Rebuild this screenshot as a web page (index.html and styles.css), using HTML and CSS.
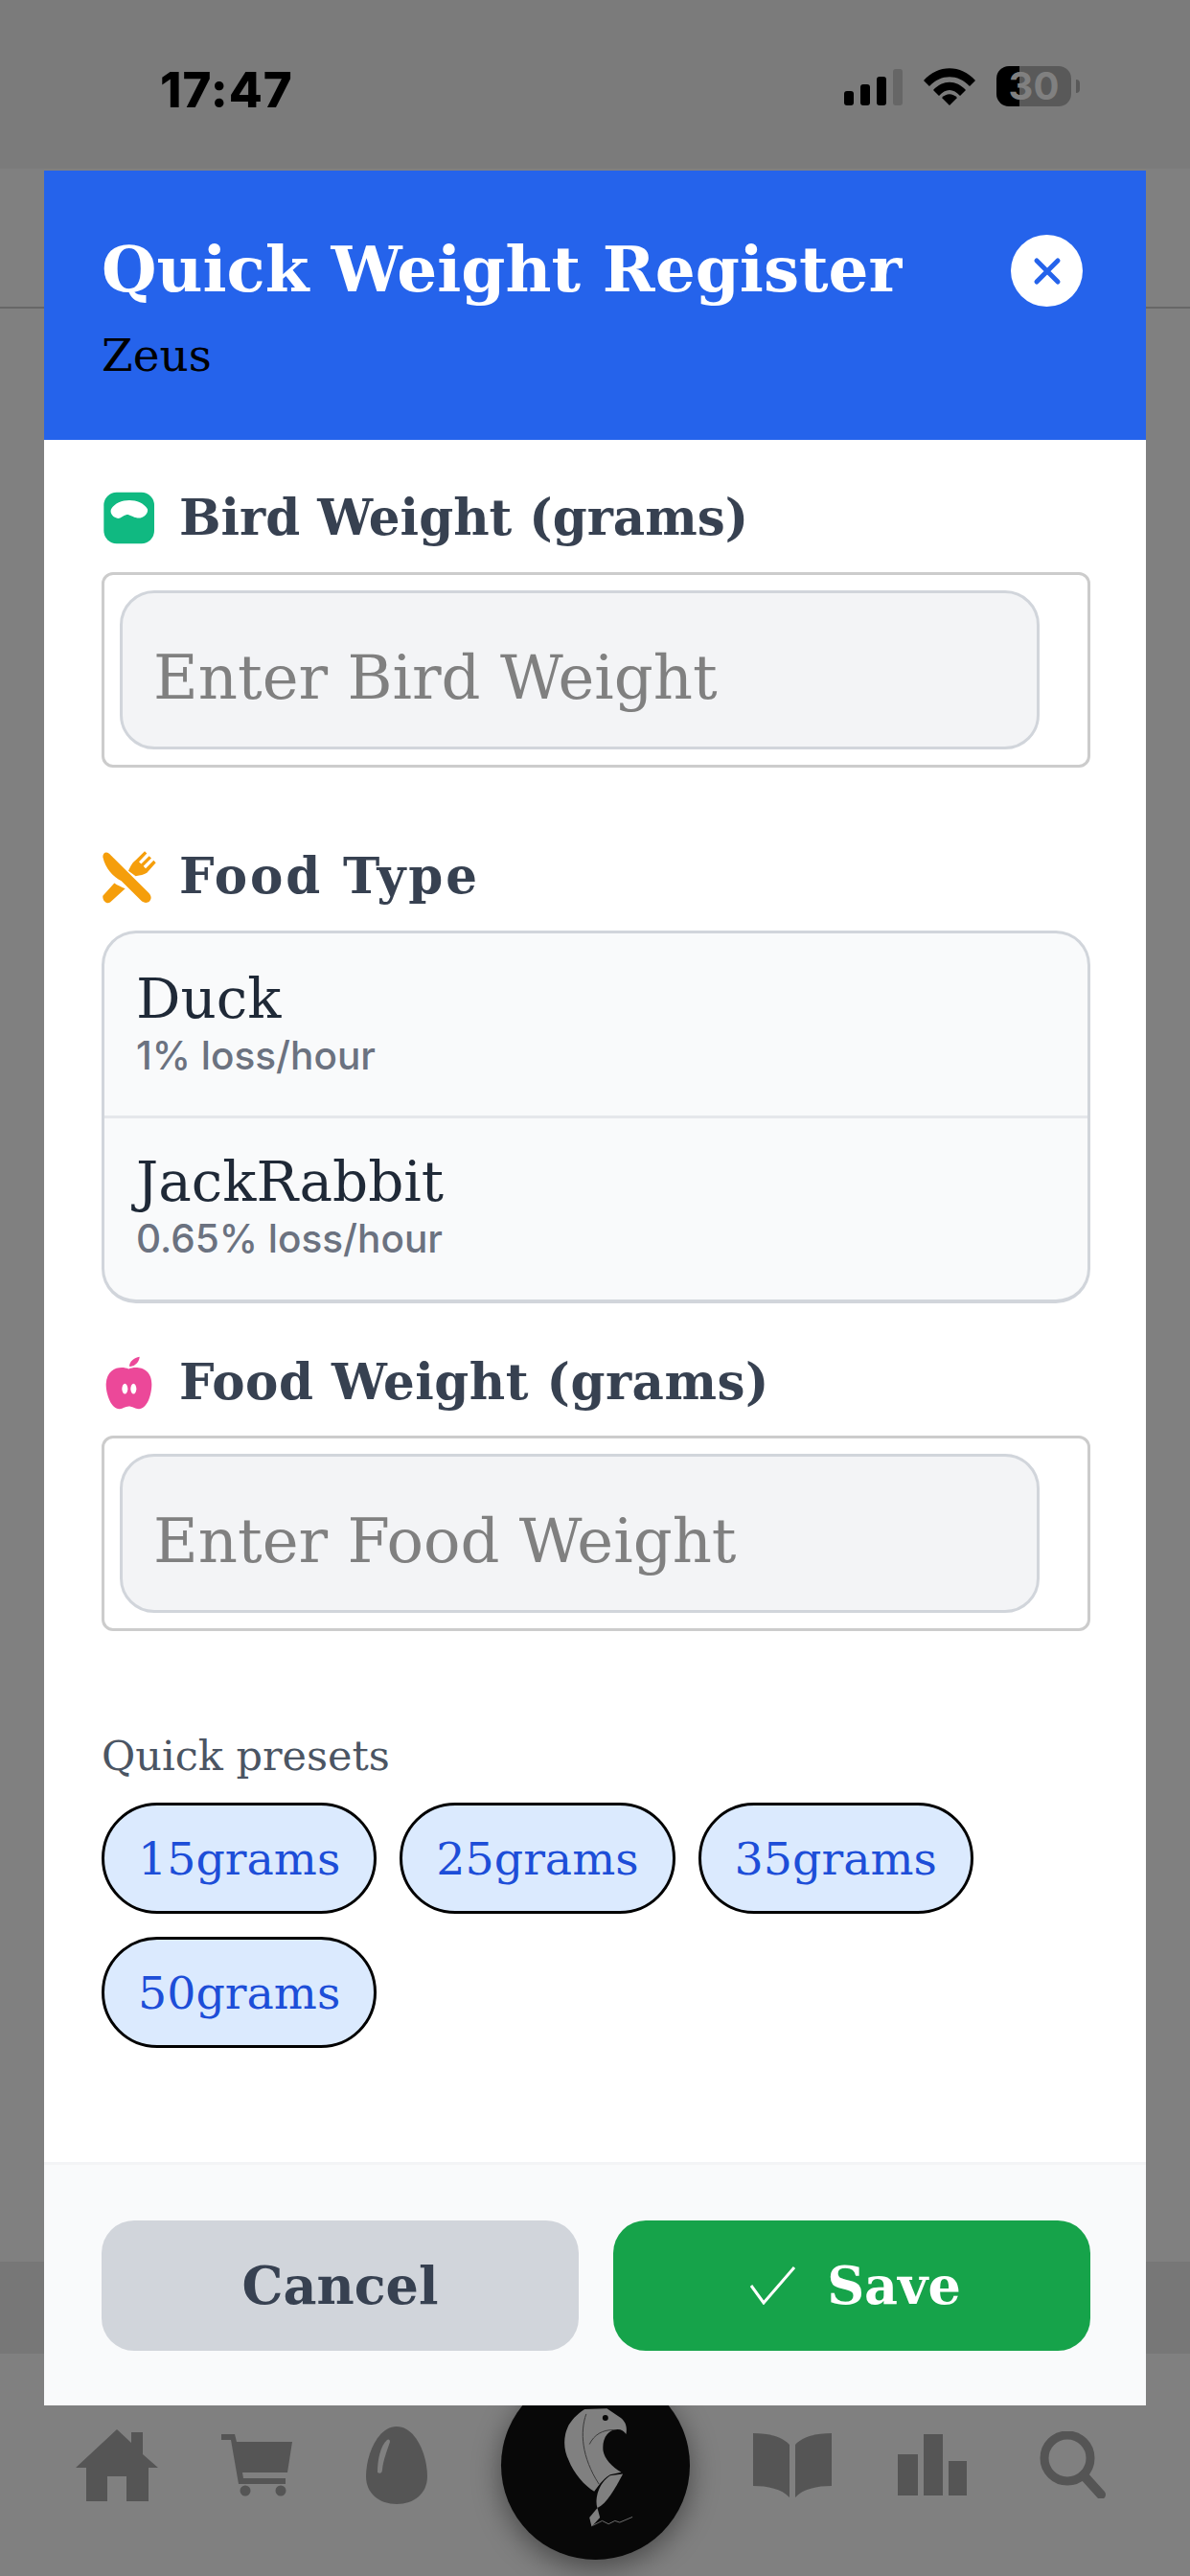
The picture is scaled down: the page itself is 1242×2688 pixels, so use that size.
FILE: index.html
```html
<!DOCTYPE html>
<html lang="en">

<head>
  <meta charset="UTF-8" />
  <meta name="viewport" content="width=device-width, initial-scale=1.0" />
  <title>Quick Weight Register</title>
  <link rel="stylesheet" href="styles.css">
</head>

<body>
  <div class="screen">
    <div class="statusbar">
      <span class="time">17:47</span>
      <div class="status-icons">
        <div class="signal">
          <i class="s1"></i><i class="s2"></i><i class="s3"></i><i class="s4"></i>
        </div>
        <svg class="wifi" viewBox="0 0 54 39">
          <path d="M0 13 C15 -4 39 -4 54 13 L48 19 C36 6 18 6 6 19 Z" />
          <path d="M10 23 C20 12 34 12 44 23 L38 29 C31 21 23 21 16 29 Z" />
          <path d="M19 31 C24 26 30 26 35 31 L27 39 Z" />
        </svg>
        <div class="battery"><b>30</b></div>
        <i class="battery-nub"></i>
      </div>
    </div>
    <div class="topbar"></div>
    <div class="content"></div>
    <div class="band"></div>
    <div class="tabbar">
      <div class="tab">
        <svg width="86" height="75" viewBox="0 0 86 75"><path d="M43 0 L58 14 V3 H70 V26 L86 40 H76 V75 H53 V49 H33 V75 H11 V40 H0 Z" /></svg>
      </div>
      <div class="tab">
        <svg width="74" height="65" viewBox="0 0 74 65">
          <path d="M0 0 H14 L16 8 H74 L69 40 H22 L23 46 H67 V52 H18 L10 6 H0 Z" />
          <circle cx="25" cy="59" r="5.5" /><circle cx="62" cy="59" r="5.5" />
        </svg>
      </div>
      <div class="tab">
        <svg width="64" height="81" viewBox="0 0 64 81">
          <path d="M32 0 C52 0 64 30 64 52 C64 70 50 81 32 81 C14 81 0 70 0 52 C0 30 12 0 32 0 Z" />
          <path class="shine" d="M22 14 C15 20 12 35 12 48 C15 50 17 48 17 45 C18 35 22 25 25 16 C25 13 23 13 22 14 Z" />
        </svg>
      </div>
      <div class="logo">
        <svg viewBox="68 -20 592 592">
          <path class="eagle" d="M330 100 L400 98 L440 125 C455 135 465 150 460 178 C450 165 440 160 420 165 C395 175 385 200 388 230 C392 255 415 280 445 298 L410 305 C385 320 370 345 360 358 C330 340 295 300 280 260 C265 230 260 190 280 150 C295 125 315 110 330 100 Z" />
          <path class="eagle-line" d="M335 115 C315 170 320 250 375 335 M345 210 C360 180 385 165 420 165" />
          <circle cx="395" cy="127" r="9" fill="#080808" />
          <path class="eagle" d="M450 303 C425 350 400 395 370 410 C360 380 375 330 410 308 Z" />
          <path class="eagle" d="M370 410 L345 440 L352 468 L378 440 Z" />
          <path class="eagle-line pen" d="M355 465 L385 450 L405 460 L425 450 L440 455 L480 438" />
        </svg>
      </div>
      <div class="tab tab-after-logo">
        <svg width="82" height="67" viewBox="0 0 82 67">
          <path d="M0 0 C15 0 30 3 38 12 V67 C30 58 15 55 0 55 Z" />
          <path d="M82 0 C67 0 52 3 44 12 V67 C52 58 67 55 82 55 Z" />
        </svg>
      </div>
      <div class="tab">
        <svg width="72" height="64" viewBox="0 0 72 64">
          <rect x="0" y="21" width="21" height="43" /><rect x="27" y="0" width="20" height="64" /><rect x="53" y="28" width="19" height="36" />
        </svg>
      </div>
      <div class="tab">
        <svg width="69" height="70" viewBox="0 0 69 70">
          <circle cx="29" cy="28" r="24" fill="none" stroke-width="9" />
          <path d="M46 46 L64 66" fill="none" stroke-width="10" stroke-linecap="round" />
        </svg>
      </div>
    </div>

    <div class="modal">
      <div class="modal-header">
        <div>
          <h1>Quick Weight Register</h1>
          <p class="bird-name">Zeus</p>
        </div>
        <div class="close">
          <svg width="30" height="30" viewBox="0 0 30 30"><path d="M4 4 L26 26 M26 4 L4 26" /></svg>
        </div>
      </div>

      <div class="modal-body">
        <div class="label first">
          <svg class="label-icon" viewBox="48 64.5 171 171">
            <rect x="55" y="70" width="158" height="160" rx="40" fill="#10b981" />
            <path fill="#fff" d="M78 122 C100 85 170 85 192 122 C195 135 180 152 160 150 C145 148 135 138 125 140 C115 142 105 155 95 150 C80 145 74 132 78 122 Z" />
          </svg>
          <span>Bird Weight (grams)</span>
        </div>
        <div class="input-box">
          <input type="text" placeholder="Enter Bird Weight" />
        </div>

        <div class="label food-type">
          <svg class="label-icon" viewBox="48 43.5 171 171">
            <g fill="#f59e0b">
              <path d="M52 68 C52 55 62 50 72 58 L195 180 C205 190 205 200 198 207 C190 214 180 212 172 205 L110 143 C85 130 60 105 52 68 Z" />
              <path d="M52 190 L88 150 C98 157 110 162 122 167 L75 210 C65 218 50 205 52 190 Z" />
              <path d="M132 112 C140 95 145 85 155 78 L183 50 L190 57 L165 83 L172 90 L197 65 L204 72 L179 97 L186 104 L211 79 L218 86 L190 118 C180 125 170 125 155 128 Z" />
            </g>
          </svg>
          <span>Food Type</span>
        </div>
        <ul class="food-list">
          <li>
            <div class="food-name">Duck</div>
            <div class="food-loss">1% loss/hour</div>
          </li>
          <li>
            <div class="food-name">JackRabbit</div>
            <div class="food-loss">0.65% loss/hour</div>
          </li>
        </ul>

        <div class="label food-weight">
          <svg class="label-icon" viewBox="48 34.5 171 171">
            <path fill="#ec4899" d="M133 78 C110 68 65 72 62 125 C62 160 80 205 105 203 C115 203 122 195 133 195 C145 195 152 203 165 203 C190 203 205 160 205 125 C205 72 155 68 133 78 Z" />
            <path fill="#ec4899" d="M135 70 C135 55 150 42 167 40 C167 55 152 72 135 70 Z" />
            <ellipse cx="121" cy="140" rx="9" ry="16" fill="#fff" />
            <ellipse cx="148" cy="140" rx="9" ry="16" fill="#fff" />
          </svg>
          <span>Food Weight (grams)</span>
        </div>
        <div class="input-box">
          <input type="text" placeholder="Enter Food Weight" />
        </div>

        <p class="presets-title">Quick presets</p>
        <div class="presets">
          <button class="chip">15grams</button>
          <button class="chip">25grams</button>
          <button class="chip">35grams</button>
          <button class="chip">50grams</button>
        </div>
      </div>

      <div class="modal-footer">
        <button class="btn btn-cancel">Cancel</button>
        <button class="btn btn-save">
          <svg width="48" height="40" viewBox="0 0 48 40"><path d="M1 20 L14 38 L46 1" /></svg>
          Save
        </button>
      </div>
    </div>
  </div>
</body>

</html>
```

FILE: styles.css
```css
* {
  box-sizing: border-box;
}
body {
  margin: 0;
  font-family: 'DejaVu Serif', serif;
  background: #808080;
}
.screen {
  position: relative;
  width: 1242px;
  height: 2688px;
  display: flex;
  flex-direction: column;
  overflow: hidden;
}

/* stuff behind the dialog */
.statusbar {
  height: 176px;
  background: #7b7b7b;
  display: flex;
  justify-content: space-between;
  padding: 66px 115px 0 167px;
}
.time {
  font-family: 'Inter', sans-serif;
  font-weight: 800;
  font-size: 51px;
  letter-spacing: 1px;
  line-height: 56px;
  color: #000;
}
.status-icons {
  display: flex;
  align-items: flex-start;
  padding-top: 3px;
}
.signal {
  display: flex;
  align-items: flex-end;
  gap: 7px;
  height: 38px;
  margin-top: 3px;
}
.signal i {
  display: block;
  width: 10px;
  border-radius: 3px;
  background: #000;
}
.s1 { height: 15px; }
.s2 { height: 22px; }
.s3 { height: 30px; }
.signal .s4 { height: 38px; background: #666; }
.wifi {
  width: 54px;
  height: 39px;
  margin: 2px 22px 0 22px;
}
.battery {
  width: 78px;
  height: 42px;
  border-radius: 13px;
  background: linear-gradient(to right, #000 24px, #595959 24px);
  text-align: center;
  font-family: 'Inter', sans-serif;
  font-size: 40px;
  line-height: 42px;
  color: #808080;
}
.battery-nub {
  display: block;
  width: 4px;
  height: 14px;
  margin: 14px 0 0 5px;
  border-radius: 0 4px 4px 0;
  background: #595959;
}
.topbar {
  height: 146px;
  border-bottom: 2px solid #676767;
}
.content {
  flex: 1;
}
.band {
  height: 96px;
  background: #777;
}
.tabbar {
  height: 232px;
  display: flex;
  align-items: center;
  padding-left: 49px;
}
.tab {
  width: 146px;
  display: flex;
  justify-content: center;
}
.tab svg {
  fill: #555;
  stroke: #555;
  stroke-width: 0;
}
.shine {
  fill: #808080;
}
.tab-after-logo {
  margin-left: 34px;
}
.logo {
  width: 197px;
  height: 197px;
  margin-left: 36px;
  border-radius: 50%;
  background: #080808;
  box-shadow: 0 8px 30px rgba(0, 0, 0, 0.45);
}
.logo svg {
  display: block;
  width: 197px;
  height: 197px;
}
.eagle {
  fill: #808080;
}
.eagle-line {
  fill: none;
  stroke: #3a3a3a;
  stroke-width: 3;
}
.pen {
  stroke: #6a6a6a;
}

/* dialog */
.modal {
  position: absolute;
  top: 178px;
  left: 46px;
  width: 1150px;
  height: 2332px;
  background: #fff;
  display: flex;
  flex-direction: column;
}
.modal-header {
  height: 281px;
  background: #2563eb;
  display: flex;
  justify-content: space-between;
  padding: 63px 66px 0 60px;
}
h1 {
  margin: 0;
  font-size: 66px;
  line-height: 80px;
  font-weight: 700;
  color: #fff;
}
.bird-name {
  margin: 22px 0 0;
  font-size: 47px;
  line-height: 56px;
  color: #000;
}
.close {
  width: 75px;
  height: 75px;
  margin-top: 4px;
  border-radius: 50%;
  background: #fff;
  display: flex;
  align-items: center;
  justify-content: center;
}
.close svg {
  fill: none;
  stroke: #2563eb;
  stroke-width: 5;
  stroke-linecap: round;
}

.modal-body {
  flex: 1;
  padding: 0 58px 0 60px;
}
.label {
  display: flex;
  align-items: center;
  gap: 24px;
  height: 54px;
  font-size: 51.5px;
  font-weight: 700;
  color: #374151;
}
.label-icon {
  width: 57px;
  height: 57px;
  flex: none;
}
.label.first { margin: 54px 0 30px; }
.label.food-type { margin: 86px 0 30px; letter-spacing: 2.9px; }
.label.food-weight { margin: 55px 0 29px; letter-spacing: 0.5px; }

.input-box {
  height: 204px;
  padding: 16px 50px 16px 16px;
  border: 3px solid #ccc;
  border-radius: 12px;
  background: #fff;
}
.input-box input {
  display: block;
  width: 100%;
  height: 100%;
  padding: 16px 32px 0;
  border: 3px solid #d1d5db;
  border-radius: 36px;
  background: #f3f4f6;
  font-family: 'DejaVu Serif', serif;
  font-size: 64px;
}
.input-box input::placeholder {
  color: #808080;
  opacity: 1;
}

.food-list {
  list-style: none;
  margin: 0;
  padding: 0;
  border: 3px solid #d1d5db;
  border-bottom-width: 4px;
  border-radius: 36px;
  background: #f9fafb;
  overflow: hidden;
}
.food-list li {
  height: 190px;
  padding: 33px 33px 0;
}
.food-list li + li {
  height: 192px;
  padding-top: 31px;
  border-top: 3px solid #e5e7eb;
}
.food-name {
  font-size: 58px;
  line-height: 70px;
  color: #1f2937;
}
.food-loss {
  font-family: 'Inter', sans-serif;
  font-weight: 500;
  font-size: 40.5px;
  line-height: 50px;
  color: #6b7280;
}

.presets-title {
  margin: 102px 0 0;
  font-size: 43px;
  line-height: 56px;
  color: #4b5563;
}
.presets {
  display: flex;
  flex-wrap: wrap;
  gap: 24px 24px;
  margin-top: 21px;
}
.chip {
  height: 116px;
  padding: 0 35px;
  border: 3px solid #000;
  border-radius: 58px;
  background: #dbeafe;
  font-family: 'DejaVu Serif', serif;
  font-size: 47.5px;
  color: #1d4ed8;
}

.modal-footer {
  height: 254px;
  padding: 58px 58px 0 60px;
  border-top: 3px solid #f3f4f6;
  background: #f9fafb;
  display: flex;
  gap: 36px;
}
.btn {
  flex: 1;
  height: 136px;
  border: none;
  border-radius: 34px;
  font-family: 'DejaVu Serif', serif;
  font-size: 54px;
  font-weight: 700;
  display: flex;
  align-items: center;
  justify-content: center;
  gap: 32px;
}
.btn-cancel {
  background: #d1d5db;
  color: #374151;
}
.btn-save {
  background: #16a34a;
  color: #fff;
}
.btn-save svg {
  margin-left: 8px;
  fill: none;
  stroke: #fff;
  stroke-width: 3;
}
```
